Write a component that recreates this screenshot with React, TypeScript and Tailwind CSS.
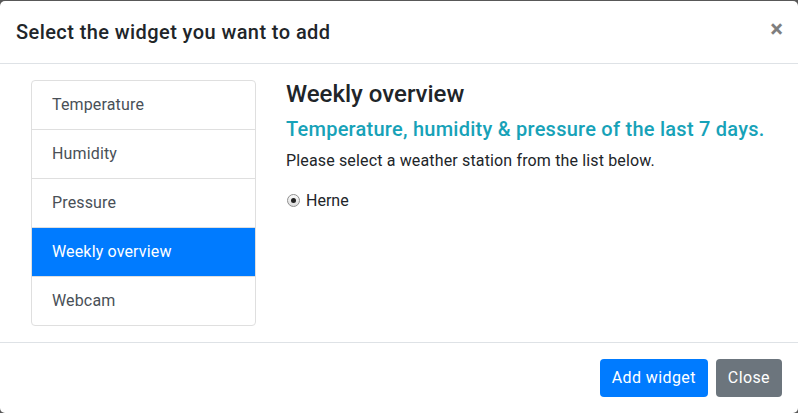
import React from "react";

const items = ["Temperature", "Humidity", "Pressure", "Weekly overview", "Webcam"];

export default function App() {
  return (
    <div
      className="w-[798px] h-[413px] bg-[#585858] pt-px overflow-hidden text-[#212529]"
      style={{ fontFamily: "Roboto, 'Noto Sans', sans-serif" }}
    >
      <div className="bg-white rounded-[5px] h-[412px] flex flex-col">
        <div className="flex items-start justify-between p-4 border-b border-[#dee2e6]">
          <h5 className="text-[20px] leading-[30px] font-medium m-0 tracking-[0.42px]">Select the widget you want to add</h5>
          <button className="text-[24px] leading-[24px] font-bold text-black opacity-50 mt-0 mr-[-1px]">×</button>
        </div>
        <div className="p-4">
          <div className="px-[15px] flex">
            <div className="w-[225px] shrink-0 border border-[#dfdfdf] rounded-[4px] overflow-hidden">
              {items.map((it, i) => (
                <div
                  key={it}
                  className={
                    "px-5 py-3 text-[16px] leading-6 tracking-[0.15px] " +
                    (i > 0 ? "border-t border-[#dfdfdf] " : "") +
                    (it === "Weekly overview" ? "bg-[#007bff] text-white border-[#007bff]" : "text-[#495057]")
                  }
                >
                  {it}
                </div>
              ))}
            </div>
            <div className="ml-[30px] flex-1">
              <h4 className="text-[24px] leading-[28.8px] font-medium mb-2">Weekly overview</h4>
              <h5 className="text-[20px] leading-6 font-medium mb-2 text-[#17a2b8] tracking-[0.25px]">
                Temperature, humidity &amp; pressure of the last 7 days.
              </h5>
              <p className="text-[16px] leading-6 mb-4 tracking-[0.15px]">Please select a weather station from the list below.</p>
              <label className="flex items-center text-[16px] leading-6">
                <span className="w-[13px] h-[13px] rounded-full border border-[#8f8f8f] bg-gradient-to-b from-[#fafafa] to-[#dcdcdc] flex items-center justify-center ml-px mr-[6px]">
                  <span className="w-[5px] h-[5px] rounded-full bg-[#222]" />
                </span>
                Herne
              </label>
            </div>
          </div>
        </div>
        <div className="mt-auto border-t border-[#dee2e6] flex justify-end items-center p-3">
          <button className="m-1 h-[38px] px-3 rounded-[4px] bg-[#007bff] text-white text-[16px] leading-6 tracking-[0.4px]">Add widget</button>
          <button className="m-1 h-[38px] px-3 rounded-[4px] bg-[#6c757d] text-white text-[16px] leading-6 tracking-[0.4px]">Close</button>
        </div>
      </div>
    </div>
  );
}
